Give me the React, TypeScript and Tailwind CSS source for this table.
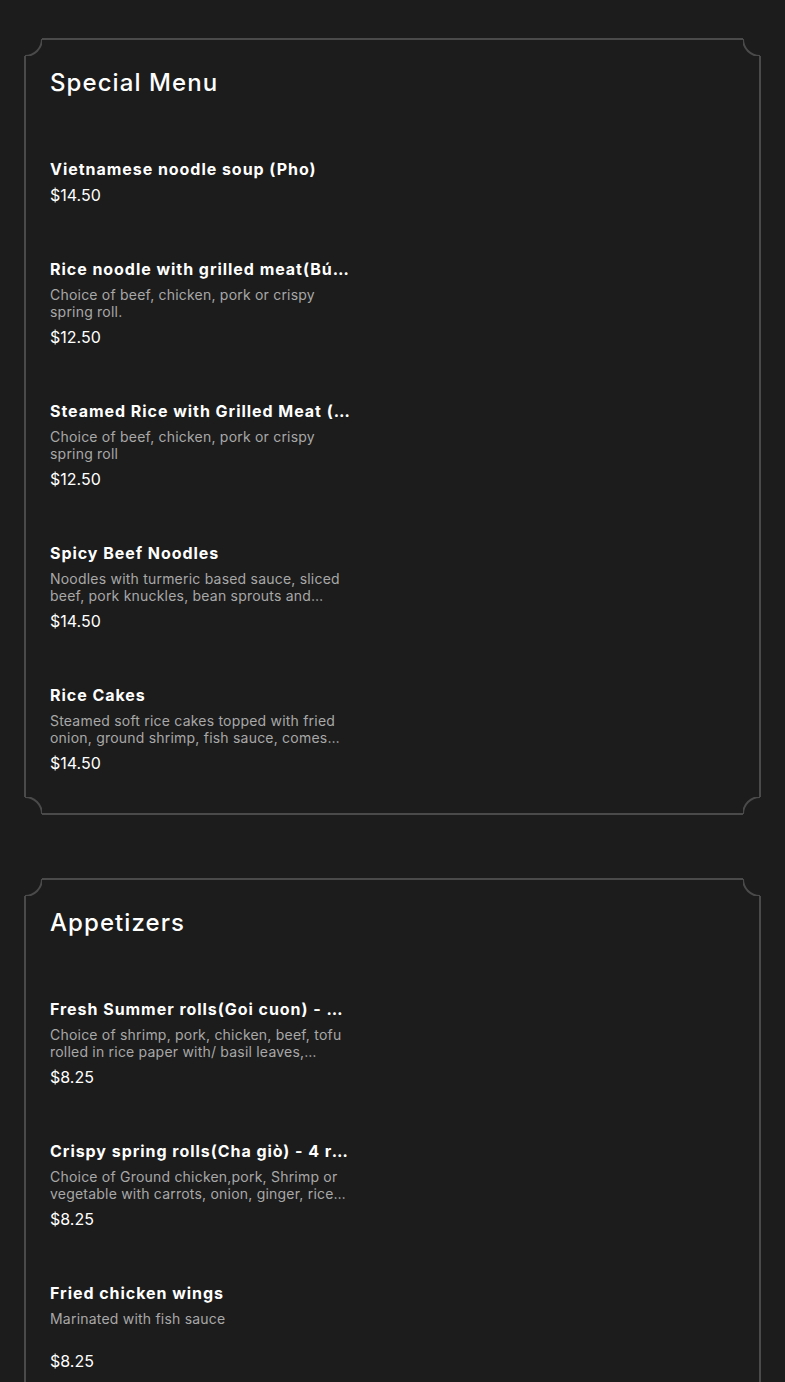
import type { ReactNode } from 'react';

type MenuItem = {
  name: string;
  description?: string;
  price: string;
};

type Section = {
  title: string;
  items: MenuItem[];
};

const sections: Section[] = [
  {
    title: 'Special Menu',
    items: [
      { name: 'Vietnamese noodle soup (Pho)', price: '$14.50' },
      {
        name: 'Rice noodle with grilled meat(Bún thịt nướng)',
        description: 'Choice of beef, chicken, pork or crispy spring roll.',
        price: '$12.50',
      },
      {
        name: 'Steamed Rice with Grilled Meat (Cơm tấm)',
        description: 'Choice of beef, chicken, pork or crispy spring roll',
        price: '$12.50',
      },
      {
        name: 'Spicy Beef Noodles',
        description:
          'Noodles with turmeric based sauce, sliced beef, pork knuckles, bean sprouts and fresh herbs',
        price: '$14.50',
      },
      {
        name: 'Rice Cakes',
        description:
          'Steamed soft rice cakes topped with fried onion, ground shrimp, fish sauce, comes with pork roll',
        price: '$14.50',
      },
    ],
  },
  {
    title: 'Appetizers',
    items: [
      {
        name: 'Fresh Summer rolls(Goi cuon) - 3 rolls',
        description:
          'Choice of shrimp, pork, chicken, beef, tofu rolled in rice paper with/ basil leaves, lettuce and vermicelli',
        price: '$8.25',
      },
      {
        name: 'Crispy spring rolls(Cha giò) - 4 rolls',
        description:
          'Choice of Ground chicken,pork, Shrimp or vegetable with carrots, onion, ginger, rice noodles',
        price: '$8.25',
      },
      {
        name: 'Fried chicken wings',
        description: 'Marinated with fish sauce',
        price: '$8.25',
      },
      {
        name: 'Crispy tofu',
        description: 'Served with sweet chili sauce',
        price: '$7.50',
      },
    ],
  },
];

// concave corner arc, flipped per corner
function Corner({ className }: { className: string }) {
  return (
    <svg width="18" height="18" viewBox="0 0 18 18" className={className}>
      <path d="M1 18 A17 17 0 0 0 18 1" fill="none" stroke="#4a4a4a" strokeWidth="2" />
    </svg>
  );
}

function Frame({ children }: { children: ReactNode }) {
  return (
    <div className="grid grid-cols-[18px_1fr_18px]">
      <Corner className="block" />
      <div className="border-t-2 border-[#4a4a4a]" />
      <Corner className="block -scale-x-100" />
      <div className="col-span-3 border-x-2 border-[#4a4a4a]">{children}</div>
      <Corner className="block -scale-y-100" />
      <div className="border-b-2 border-[#4a4a4a]" />
      <Corner className="block -scale-100" />
    </div>
  );
}

function Item({ item }: { item: MenuItem }) {
  return (
    <div className="w-[300px]">
      <div className="truncate text-base leading-5 font-bold tracking-[0.06em] text-white">
        {item.name}
      </div>
      {item.description ? (
        <>
          <p className="mt-[7px] h-[34px] line-clamp-2 text-sm leading-[17px] tracking-[0.015em] text-[#a8a8a8]">
            {item.description}
          </p>
          <div className="mt-[7px] text-base leading-5 text-white">{item.price}</div>
        </>
      ) : (
        <div className="mt-1.5 text-base leading-5 text-white">{item.price}</div>
      )}
    </div>
  );
}

export default function App() {
  return (
    <div
      className="min-h-screen bg-[#1c1c1c] px-6 pt-[38px] pb-16"
      style={{ fontFamily: 'Inter, "Noto Sans", sans-serif' }}
    >
      <div className="flex flex-col gap-[63px]">
        {sections.map((section) => (
          <Frame key={section.title}>
            <div className="pl-6 pt-[11px] pb-6">
              <h2 className="text-2xl leading-8 font-medium tracking-[0.045em] text-white">
                {section.title}
              </h2>
              <div className="mt-[60px] flex flex-col gap-[54px]">
                {section.items.map((item) => (
                  <Item key={item.name} item={item} />
                ))}
              </div>
            </div>
          </Frame>
        ))}
      </div>
    </div>
  );
}
